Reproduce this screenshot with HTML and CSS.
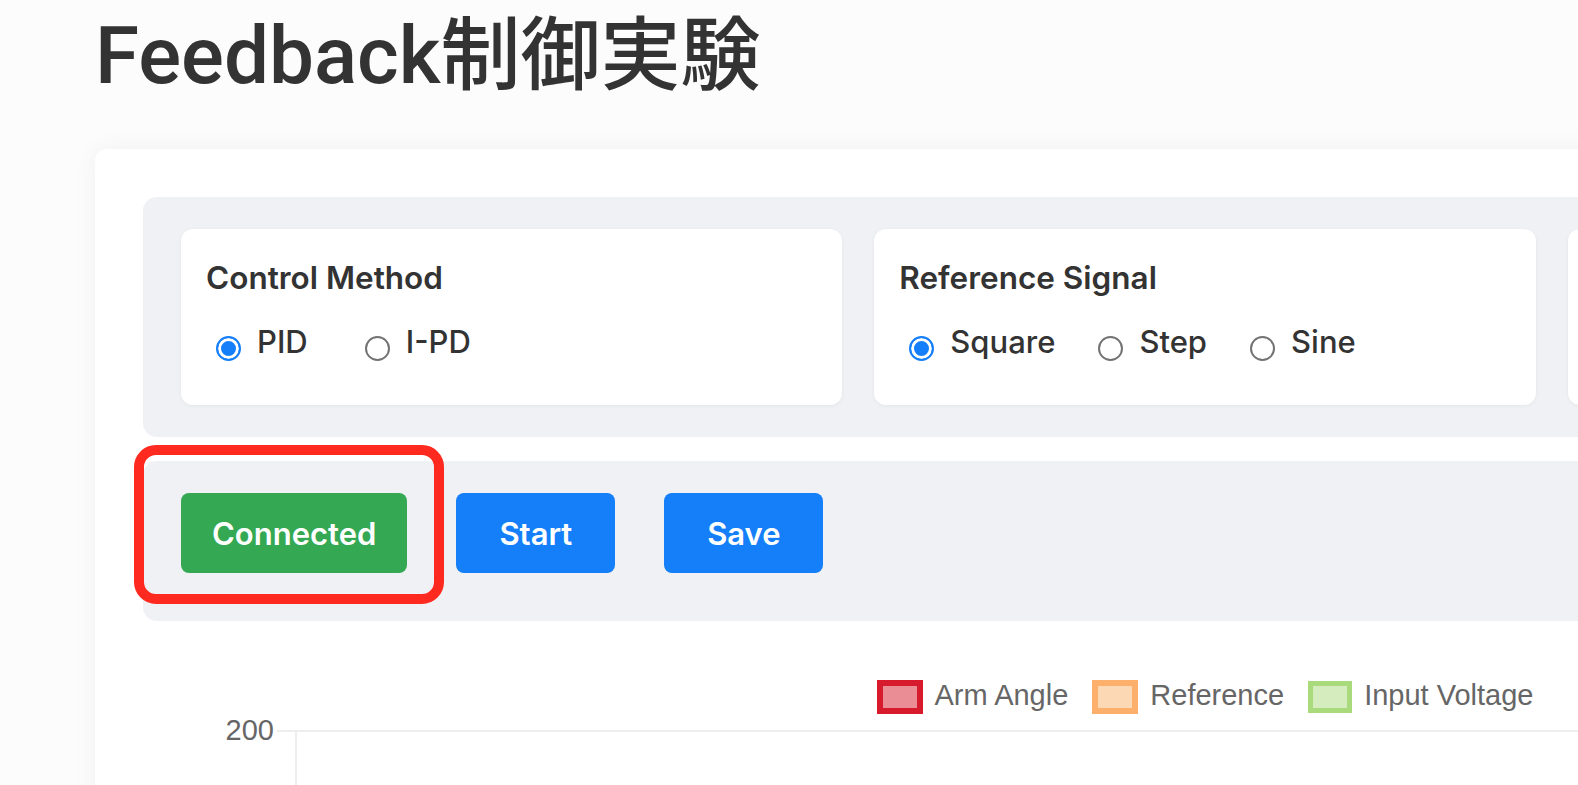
FILE: index.html
```html
<!DOCTYPE html>
<html lang="ja">

<head>
    <meta charset="UTF-8">
    <meta name="viewport" content="width=device-width, initial-scale=1.0">
    <title>Feedback制御実験</title>
    <link rel="stylesheet" href="styles.css">
</head>

<body>
    <div class="page">
        <h1 class="title">Feedback制御実験</h1>

        <div class="main-card">
            <!-- Settings -->
            <div class="panel settings">
                <div class="setting-card method">
                    <h3>Control Method</h3>
                    <div class="options">
                        <label class="option"><input type="radio" name="method" value="pid" checked><span>PID</span></label>
                        <label class="option"><input type="radio" name="method" value="ipd"><span>I-PD</span></label>
                    </div>
                </div>
                <div class="setting-card signal">
                    <h3>Reference Signal</h3>
                    <div class="options">
                        <label class="option"><input type="radio" name="signal" value="square" checked><span>Square</span></label>
                        <label class="option"><input type="radio" name="signal" value="step"><span>Step</span></label>
                        <label class="option"><input type="radio" name="signal" value="sine"><span>Sine</span></label>
                    </div>
                </div>
                <div class="setting-card"></div>
            </div>

            <!-- Controls -->
            <div class="panel controls">
                <div class="connect-wrap">
                    <button class="btn btn-success" id="connect-btn">Connected</button>
                    <span class="highlight"></span>
                </div>
                <button class="btn btn-primary" id="start-btn">Start</button>
                <button class="btn btn-primary" id="save-btn">Save</button>
            </div>

            <!-- Chart -->
            <div class="chart">
                <div class="legend">
                    <div class="legend-item"><span class="swatch arm"></span><span>Arm Angle</span></div>
                    <div class="legend-item"><span class="swatch ref"></span><span>Reference</span></div>
                    <div class="legend-item"><span class="swatch volt"></span><span>Input Voltage</span></div>
                </div>
                <div class="plot">
                    <div class="y-axis"><span>200</span></div>
                    <div class="grid">
                        <div class="grid-inner"></div>
                    </div>
                </div>
            </div>
        </div>
    </div>
</body>

</html>
```

FILE: styles.css
```css
html,
body {
    overflow: hidden;
}

body {
    margin: 0;
    background: #fcfcfd;
    font-family: 'Inter', 'Noto Sans CJK JP', sans-serif;
    color: #333;
}

.page {
    padding: 8px 0 0 95px;
}

.title {
    font-family: 'Roboto', 'Noto Sans CJK JP', sans-serif;
    font-size: 80px;
    font-weight: 500;
    line-height: 96px;
    margin: 0 0 45px 0;
    color: #333;
}

.main-card {
    width: 2220px;
    height: 800px;
    box-sizing: border-box;
    padding: 48px;
    background: white;
    border-radius: 12px;
    box-shadow: 0 0 24px rgba(0, 0, 0, 0.05);
}

.panel {
    background: #f0f1f5;
    border-radius: 14px;
}

.settings {
    display: grid;
    grid-template-columns: repeat(3, 1fr);
    gap: 32px;
    padding: 32px 38px;
}

.setting-card {
    background: white;
    border-radius: 12px;
    height: 176px;
    box-sizing: border-box;
    padding: 30px 25px 0;
    box-shadow: 0 1px 4px rgba(0, 0, 0, 0.05);
}

.setting-card h3 {
    margin: 0;
    font-size: 31.5px;
    font-weight: 600;
    line-height: 38px;
}

.options {
    display: flex;
    margin-top: 27px;
}

.option {
    display: flex;
    align-items: flex-start;
    font-size: 31px;
    font-weight: 500;
    line-height: 36px;
    margin-right: 33px;
}

.method .option {
    margin-right: 47px;
}

.option input {
    appearance: none;
    width: 25px;
    height: 25px;
    margin: 12px 16px 0 10px;
    border: 2px solid #737373;
    border-radius: 50%;
    background: white;
    box-sizing: border-box;
}

.option input:checked {
    border-color: #147ff8;
    background: #147ff8;
    box-shadow: inset 0 0 0 3px white;
}

.controls {
    display: flex;
    gap: 49px;
    margin-top: 24px;
    padding: 32px 38px 48px;
}

.connect-wrap {
    position: relative;
    display: flex;
}

.btn {
    height: 80px;
    min-width: 159px;
    padding: 0 31px;
    border: none;
    border-radius: 8px;
    font-family: 'Inter', sans-serif;
    font-size: 31px;
    font-weight: 600;
    color: white;
    cursor: pointer;
}

.btn-success {
    background: #34a853;
}

.btn-primary {
    background: #147ff8;
}

.highlight {
    position: absolute;
    left: -47px;
    right: -37px;
    top: -48px;
    bottom: -31px;
    border: 10px solid #ff2a1f;
    border-radius: 22px;
    pointer-events: none;
}

.chart {
    margin-top: 59px;
}

.legend {
    display: flex;
    justify-content: center;
    gap: 24px;
    font-family: 'Liberation Sans', Arial, sans-serif;
    font-size: 29px;
    line-height: 30px;
    color: #666;
}

.legend-item {
    display: flex;
    align-items: flex-start;
    gap: 12px;
}

.swatch {
    width: 46px;
    height: 34px;
    box-sizing: border-box;
    border: 6px solid;
}

.swatch.arm {
    border-color: #d81b2c;
    background: #eb8d94;
}

.swatch.ref {
    border-color: #fdb06c;
    background: #fdd8b5;
}

.swatch.volt {
    width: 44px;
    height: 32px;
    margin-top: 1px;
    border-width: 5px;
    border-color: #a9db7d;
    background: #d5edbe;
}

.plot {
    display: flex;
    margin-top: 16px;
    height: 200px;
}

.y-axis {
    width: 134px;
    box-sizing: border-box;
    padding-right: 3px;
    text-align: right;
    font-family: 'Liberation Sans', Arial, sans-serif;
    font-size: 29px;
    line-height: 28px;
    color: #666;
}

.y-axis span {
    display: block;
    margin-top: -14px;
}

.grid {
    flex: 1;
    border-top: 2px solid #eeeeee;
}

.grid-inner {
    margin-left: 18px;
    height: 100%;
    border-left: 2px solid #eeeeee;
}
```
